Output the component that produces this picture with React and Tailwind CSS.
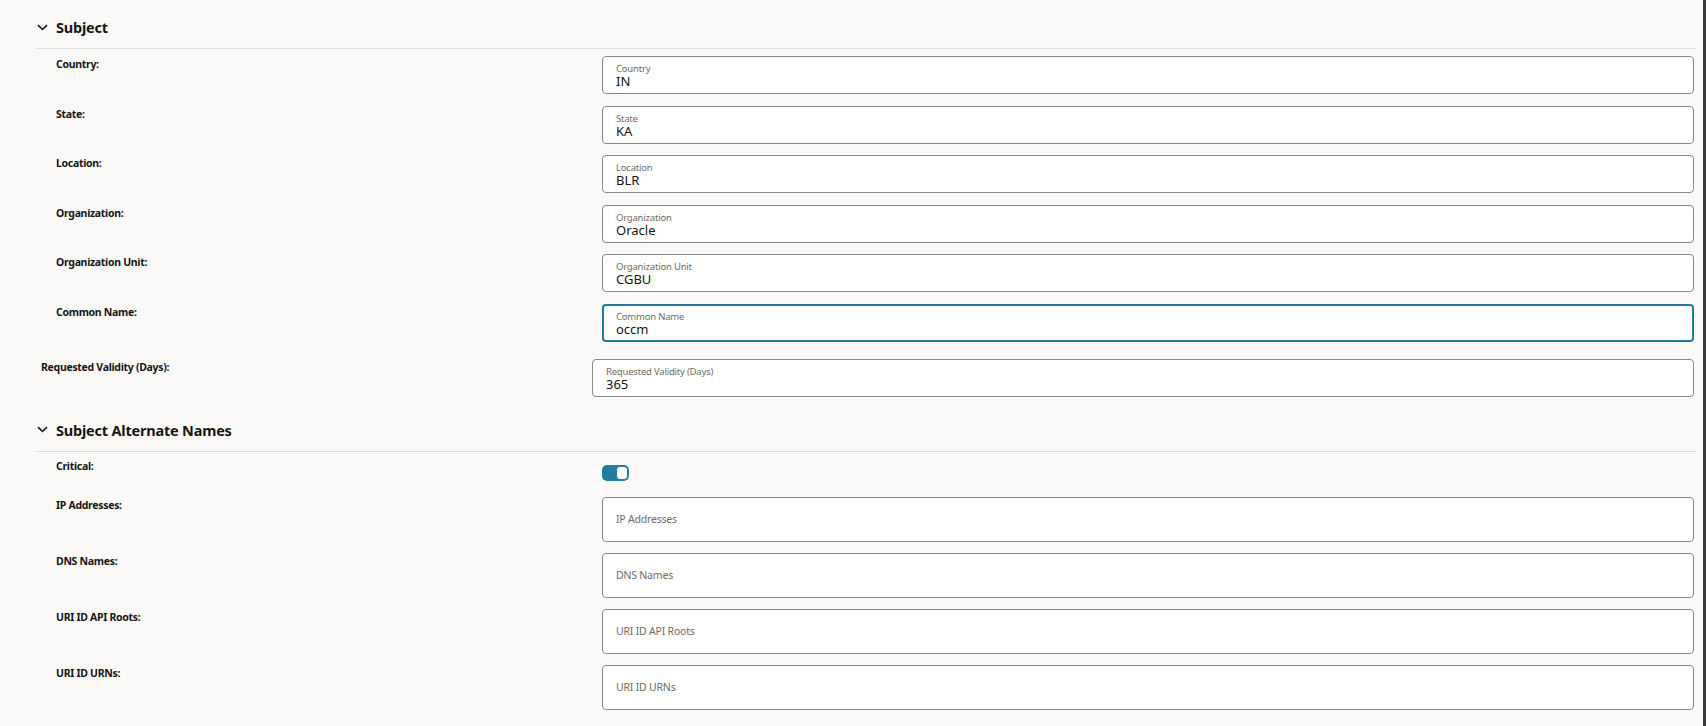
const subjectFields = [
  { label: 'Country', value: 'IN' },
  { label: 'State', value: 'KA' },
  { label: 'Location', value: 'BLR' },
  { label: 'Organization', value: 'Oracle' },
  { label: 'Organization Unit', value: 'CGBU' },
  { label: 'Common Name', value: 'occm', focused: true },
]

const sanFields = ['IP Addresses', 'DNS Names', 'URI ID API Roots', 'URI ID URNs']

function Chevron() {
  return (
    <svg width="11" height="7" viewBox="0 0 11 7" className="shrink-0">
      <path d="M1 1.2 L5.5 5.5 L10 1.2" fill="none" stroke="#161513" strokeWidth="1.6" />
    </svg>
  )
}

function SectionHeader({ title }) {
  return (
    <div className="flex h-[49px] items-end border-b border-[#e0dedb] pb-[12px]">
      <div className="flex items-center">
        <span className="ml-[1px] w-[19px]">
          <Chevron />
        </span>
        <h2 className="text-[14.5px] font-bold leading-[18px] tracking-[-0.2px] text-[#161513]">{title}</h2>
      </div>
    </div>
  )
}

function RowLabel({ children, className = '' }) {
  return (
    <div className={`shrink-0 text-[10.5px] font-bold leading-[14px] tracking-[-0.3px] text-[#161513] ${className}`}>
      {children}:
    </div>
  )
}

function FilledInput({ label, value, focused }) {
  return (
    <div
      className={`mr-[2px] h-[38px] flex-1 rounded-[4px] bg-white ${
        focused ? 'border-2 border-[#227a9c] pl-[12px] pt-[5px]' : 'border border-[#8b8986] pl-[13px] pt-[6px]'
      }`}
    >
      <div className="text-[9.5px] leading-[11px] tracking-[-0.2px] text-[#6f6b66]">{label}</div>
      <div className="text-[13px] leading-[15px] text-[#161513]">{value}</div>
    </div>
  )
}

function EmptyInput({ placeholder }) {
  return (
    <div className="mr-[2px] flex h-[45px] flex-1 items-center rounded-[4px] border border-[#8b8986] bg-white pl-[13px]">
      <span className="text-[10.5px] tracking-[-0.2px] text-[#6f6b66]">{placeholder}</span>
    </div>
  )
}

export default function App() {
  return (
    <div className="flex h-[726px] overflow-hidden bg-[#faf9f8] font-['Noto_Sans',sans-serif]">
      <div className="w-[1696px] shrink-0 pl-[36px]">
        <SectionHeader title="Subject" />

        <div className="mt-[7px] flex flex-col gap-[11.6px]">
          {subjectFields.map((f) => (
            <div key={f.label} className="flex">
              <RowLabel className="w-[566px] pl-[20px] pt-[1px]">{f.label}</RowLabel>
              <FilledInput {...f} />
            </div>
          ))}
        </div>

        <div className="mt-[17px] flex">
          <RowLabel className="w-[556px] pl-[5px] pt-[1px]">Requested Validity (Days)</RowLabel>
          <FilledInput label="Requested Validity (Days)" value="365" />
        </div>

        <div className="mt-[6px]">
          <SectionHeader title="Subject Alternate Names" />
        </div>

        <div className="mt-[7px] flex">
          <RowLabel className="w-[566px] pl-[20px]">Critical</RowLabel>
          <div className="mt-[6px] flex h-[16px] w-[27px] items-center justify-end rounded-[5px] bg-[#227e9e] pr-[1px]">
            <div className="h-[14px] w-[12px] rounded-[4px] border border-[#227e9e] bg-white" />
          </div>
        </div>

        <div className="mt-[16px] flex flex-col gap-[11px]">
          {sanFields.map((name) => (
            <div key={name} className="flex">
              <RowLabel className="w-[566px] pl-[20px] pt-[1px]">{name}</RowLabel>
              <EmptyInput placeholder={name} />
            </div>
          ))}
        </div>
      </div>
      <div className="flex-1" />
      <div className="w-[3px] bg-[#3a3a3a]" />
    </div>
  )
}
